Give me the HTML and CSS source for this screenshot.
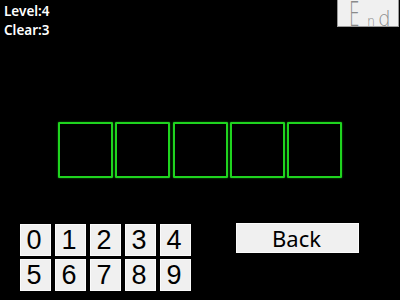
FILE: index.html
```html
<!DOCTYPE html>
<html>
<head>
<meta charset="utf-8">
<link rel="stylesheet" href="styles.css">
</head>
<body>
<div class="screen">
  <div class="top">
    <div class="stats">
      <div class="stat">Level:4</div>
      <div class="stat">Clear:3</div>
    </div>
    <div class="end-btn">
      <span class="ch ch-e">E</span><span class="ch ch-n">n</span><span class="ch ch-d">d</span>
    </div>
  </div>
  <div class="slots">
    <div class="slot"></div>
    <div class="slot"></div>
    <div class="slot"></div>
    <div class="slot"></div>
    <div class="slot"></div>
  </div>
  <div class="bottom">
    <div class="pad">
      <div class="key">0</div>
      <div class="key">1</div>
      <div class="key">2</div>
      <div class="key">3</div>
      <div class="key">4</div>
      <div class="key">5</div>
      <div class="key">6</div>
      <div class="key">7</div>
      <div class="key">8</div>
      <div class="key">9</div>
    </div>
    <div class="back-btn">Back</div>
  </div>
</div>
</body>
</html>
```
FILE: styles.css
```css
html, body {
  margin: 0;
  padding: 0;
  background: #000;
}
.screen {
  width: 400px;
  height: 300px;
  overflow: hidden;
  display: flex;
  flex-direction: column;
  background: #000;
}
.top {
  height: 40px;
  display: flex;
  justify-content: space-between;
  align-items: flex-start;
}
.stats {
  padding: 2px 0 0 4px;
  font-family: "Noto Sans", sans-serif;
  font-size: 13.5px;
  font-weight: 600;
  line-height: 19px;
  color: #fff;
}
.end-btn {
  box-sizing: border-box;
  width: 62px;
  height: 27px;
  margin-right: 1px;
  padding: 3px 0 0 11px;
  background: #f0f0f0;
  border: 1px solid #9a9a9a;
  border-top: none;
  display: flex;
  align-items: baseline;
  font-family: "DejaVu Sans", sans-serif;
  font-weight: 200;
  color: #8a8a8a;
  line-height: 22px;
}
.ch {
  display: inline-block;
  white-space: nowrap;
  transform-origin: left bottom;
}
.ch-e {
  font-size: 34px;
  width: 18px;
  transform: scaleX(0.5);
}
.ch-n {
  font-size: 14.6px;
  width: 11px;
  transform: scaleX(0.87);
}
.ch-d {
  font-size: 21px;
  width: 11px;
  transform: scaleX(0.95);
}
.slots {
  margin-top: 82px;
  display: flex;
  justify-content: center;
  gap: 2.3px;
}
.slot {
  width: 55px;
  height: 56px;
  box-sizing: border-box;
  border: 2px solid #1fd41f;
  border-radius: 1px;
  box-shadow: 0 0 2px rgba(30, 210, 30, 0.6);
}
.bottom {
  margin-top: 45px;
  padding-left: 20px;
  display: flex;
  align-items: flex-start;
}
.pad {
  margin-top: 1px;
  display: grid;
  grid-template-columns: repeat(5, 31px);
  grid-auto-rows: 32px;
  column-gap: 4px;
  row-gap: 3px;
}
.key {
  background: #f0f0f0;
  border: 1px solid #fbfbfb;
  box-sizing: border-box;
  display: flex;
  align-items: center;
  justify-content: center;
  font-family: "Liberation Sans", Arial, sans-serif;
  font-size: 27px;
  color: #000;
  padding-right: 3px;
}
.back-btn {
  margin-left: 45px;
  width: 123px;
  height: 30px;
  background: #f0f0f0;
  border: 1px solid #fbfbfb;
  box-sizing: border-box;
  display: flex;
  align-items: center;
  justify-content: center;
  font-family: "Noto Sans", sans-serif;
  font-size: 22px;
  color: #000;
  padding-right: 2px;
}
```
